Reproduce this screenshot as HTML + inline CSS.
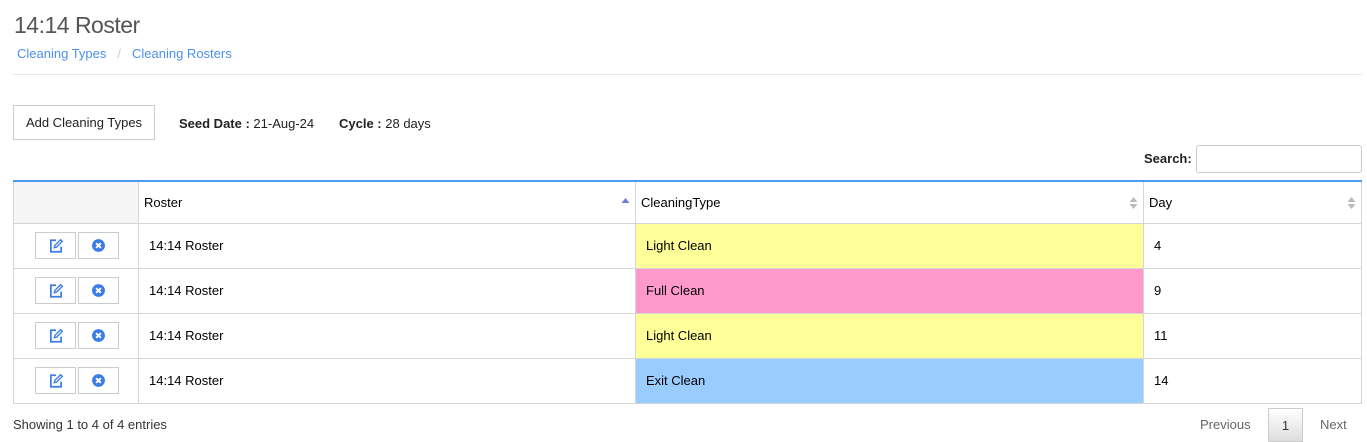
<!DOCTYPE html>
<html><head><meta charset="utf-8"><style>
*{box-sizing:border-box;margin:0;padding:0}
body{width:1367px;height:442px;background:#fff;font-family:"Liberation Sans",sans-serif;color:#333;position:relative;overflow:hidden}
.a{position:absolute}
h1{position:absolute;left:14px;top:12px;font-size:23px;font-weight:normal;color:#555;letter-spacing:-0.5px}
.bc{left:17px;top:46px;font-size:13px;color:#4d8ff0}
.bc span{color:#ccc;margin:0 11px}
.hr{left:13px;top:74px;width:1349px;height:1px;background:#e8e8e8}
.btn{left:13px;top:105px;width:142px;height:35px;border:1px solid #ccc;font-size:13px;color:#222;text-align:center;line-height:33px}
.info{top:116px;font-size:13px;color:#222}
.srch{left:1144px;top:151px;font-size:13px;color:#222;font-weight:bold}
.inp{left:1196px;top:145px;width:166px;height:28px;border:1px solid #ccc;border-radius:3px}
table{position:absolute;left:13px;top:180px;width:1349px;border-collapse:collapse;border-top:2px solid #4a9cf0;font-size:13px;color:#000}
td,th{border:1px solid #d6d6d6;text-align:left;font-weight:normal;vertical-align:middle}
th{height:42px;padding-left:5px;position:relative}
td{height:45px;padding-left:10px}
.s{position:absolute;right:5px;top:13px;width:9px;height:16px}
.ib{display:inline-block;width:41px;height:27px;border:1px solid #ccc;margin:0 2px 0 0;vertical-align:middle;position:relative}
.ib svg{position:absolute;left:12px;top:5px}
.y{background:#ffff99}.p{background:#ff99cc}.b{background:#99ccff}
.foot{left:13px;top:417px;font-size:13px;color:#333}
.pg{top:417px;font-size:13px;color:#666}
.one{left:1268px;top:408px;width:35px;height:34px;border:1px solid #ccc;background:linear-gradient(#fff,#ddd);text-align:center;line-height:33px;font-size:13px;color:#333}
</style></head><body>
<h1>14:14 Roster</h1>
<div class="a bc">Cleaning Types<span>/</span>Cleaning Rosters</div>
<div class="a hr"></div>
<div class="a btn">Add Cleaning Types</div>
<div class="a info" style="left:179px"><b>Seed Date :</b> 21-Aug-24</div>
<div class="a info" style="left:339px"><b>Cycle :</b> 28 days</div>
<div class="a srch">Search:</div>
<div class="a inp"></div>
<table>
<tr><th style="width:125px;background:#f5f5f5"></th>
<th style="width:497px">Roster<svg class="s" viewBox="0 0 9 16"><path d="M0.5 8L4.5 3L8.5 8Z" fill="#6b7fd0"/></svg></th>
<th style="width:508px">CleaningType<svg class="s" viewBox="0 0 9 16"><path d="M0.5 7L4.5 2L8.5 7Z M0.5 9L4.5 14L8.5 9Z" fill="#bbb"/></svg></th>
<th>Day<svg class="s" viewBox="0 0 9 16"><path d="M0.5 7L4.5 2L8.5 7Z M0.5 9L4.5 14L8.5 9Z" fill="#bbb"/></svg></th></tr>
<tr><td style="padding-left:21px"><span class="ib"><svg width="16" height="16" viewBox="0 0 14 14"><path d="M7 2H2.5V12H11.5V7.5" fill="none" stroke="#3b7de8" stroke-width="1.5"/><path d="M5.5 8.5L6 6.5L11 1.5L12.5 3L7.5 8Z" fill="none" stroke="#3b7de8" stroke-width="1.2"/></svg></span><span class="ib"><svg width="15" height="15" viewBox="0 0 14 14"><circle cx="7" cy="7" r="6" fill="#3b7de8"/><path d="M4.8 4.8L9.2 9.2M9.2 4.8L4.8 9.2" stroke="#fff" stroke-width="1.8"/></svg></span></td><td>14:14 Roster</td><td class="y">Light Clean</td><td>4</td></tr>
<tr><td style="padding-left:21px"><span class="ib"><svg width="16" height="16" viewBox="0 0 14 14"><path d="M7 2H2.5V12H11.5V7.5" fill="none" stroke="#3b7de8" stroke-width="1.5"/><path d="M5.5 8.5L6 6.5L11 1.5L12.5 3L7.5 8Z" fill="none" stroke="#3b7de8" stroke-width="1.2"/></svg></span><span class="ib"><svg width="15" height="15" viewBox="0 0 14 14"><circle cx="7" cy="7" r="6" fill="#3b7de8"/><path d="M4.8 4.8L9.2 9.2M9.2 4.8L4.8 9.2" stroke="#fff" stroke-width="1.8"/></svg></span></td><td>14:14 Roster</td><td class="p">Full Clean</td><td>9</td></tr>
<tr><td style="padding-left:21px"><span class="ib"><svg width="16" height="16" viewBox="0 0 14 14"><path d="M7 2H2.5V12H11.5V7.5" fill="none" stroke="#3b7de8" stroke-width="1.5"/><path d="M5.5 8.5L6 6.5L11 1.5L12.5 3L7.5 8Z" fill="none" stroke="#3b7de8" stroke-width="1.2"/></svg></span><span class="ib"><svg width="15" height="15" viewBox="0 0 14 14"><circle cx="7" cy="7" r="6" fill="#3b7de8"/><path d="M4.8 4.8L9.2 9.2M9.2 4.8L4.8 9.2" stroke="#fff" stroke-width="1.8"/></svg></span></td><td>14:14 Roster</td><td class="y">Light Clean</td><td>11</td></tr>
<tr><td style="padding-left:21px"><span class="ib"><svg width="16" height="16" viewBox="0 0 14 14"><path d="M7 2H2.5V12H11.5V7.5" fill="none" stroke="#3b7de8" stroke-width="1.5"/><path d="M5.5 8.5L6 6.5L11 1.5L12.5 3L7.5 8Z" fill="none" stroke="#3b7de8" stroke-width="1.2"/></svg></span><span class="ib"><svg width="15" height="15" viewBox="0 0 14 14"><circle cx="7" cy="7" r="6" fill="#3b7de8"/><path d="M4.8 4.8L9.2 9.2M9.2 4.8L4.8 9.2" stroke="#fff" stroke-width="1.8"/></svg></span></td><td>14:14 Roster</td><td class="b">Exit Clean</td><td>14</td></tr>
</table>
<div class="a foot">Showing 1 to 4 of 4 entries</div>
<div class="a pg" style="left:1200px">Previous</div>
<div class="a one">1</div>
<div class="a pg" style="left:1320px">Next</div>
</body></html>
